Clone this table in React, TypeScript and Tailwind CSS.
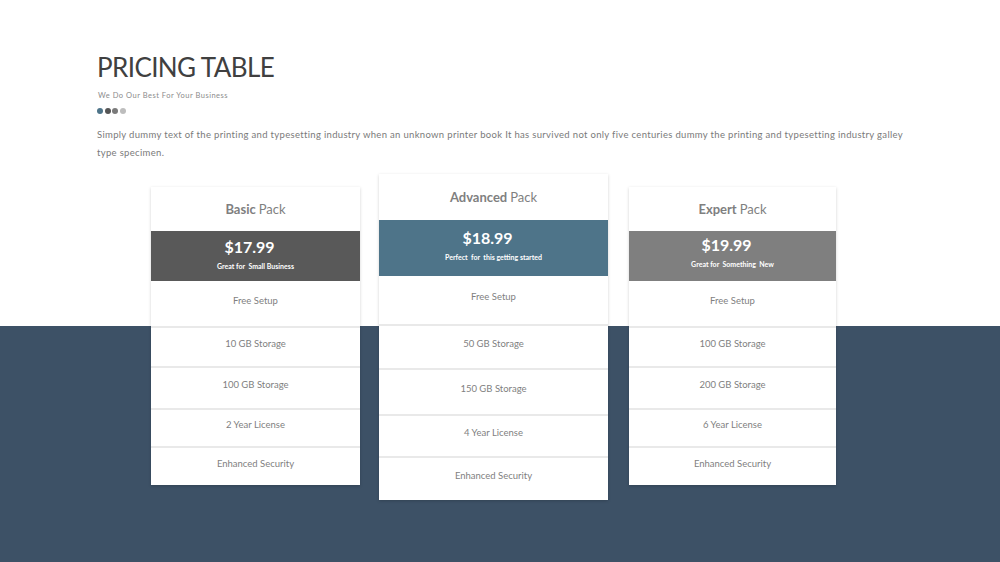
const font = { fontFamily: 'Lato, "Open Sans", sans-serif' };

type Plan = {
  name: string;
  price: string;
  note: string;
  band: string;
  width: string;
  top: string;
  header: string;
  bandH: string;
  bandPad: string;
  rows: { text: string; h: string }[];
};

const plans: Plan[] = [
  {
    name: 'Basic',
    price: '$17.99',
    note: 'Great for  Small Business',
    band: 'bg-[#595959]',
    width: 'w-[209px]',
    top: 'mt-[13px]',
    header: 'h-[44px]',
    bandH: 'h-[50px]',
    bandPad: 'pb-[4px]',
    rows: [
      { text: 'Free Setup', h: 'h-[45px]' },
      { text: '10 GB Storage', h: 'h-[40px]' },
      { text: '100 GB Storage', h: 'h-[42px]' },
      { text: '2 Year License', h: 'h-[38px]' },
      { text: 'Enhanced Security', h: 'h-[39px]' },
    ],
  },
  {
    name: 'Advanced',
    price: '$18.99',
    note: 'Perfect  for  this getting started',
    band: 'bg-[#4e7489]',
    width: 'w-[229px]',
    top: 'mt-0',
    header: 'h-[46px]',
    bandH: 'h-[56px]',
    bandPad: 'pb-[6px]',
    rows: [
      { text: 'Free Setup', h: 'h-[48px]' },
      { text: '50 GB Storage', h: 'h-[44px]' },
      { text: '150 GB Storage', h: 'h-[46px]' },
      { text: '4 Year License', h: 'h-[42px]' },
      { text: 'Enhanced Security', h: 'h-[44px]' },
    ],
  },
  {
    name: 'Expert',
    price: '$19.99',
    note: 'Great for  Something  New',
    band: 'bg-[#7f7f7f]',
    width: 'w-[207px]',
    top: 'mt-[13px]',
    header: 'h-[44px]',
    bandH: 'h-[50px]',
    bandPad: 'pb-[8px]',
    rows: [
      { text: 'Free Setup', h: 'h-[45px]' },
      { text: '100 GB Storage', h: 'h-[40px]' },
      { text: '200 GB Storage', h: 'h-[42px]' },
      { text: '6 Year License', h: 'h-[38px]' },
      { text: 'Enhanced Security', h: 'h-[39px]' },
    ],
  },
];

const PlanCard = ({ plan }: { plan: Plan }) => {
  return (
    <div className={`${plan.width} ${plan.top} bg-white shadow-[0_1px_3px_rgba(0,0,0,0.18)] flex flex-col`}>
      <div className={`${plan.header} flex items-center justify-center text-[13px] text-[#7f7f7f]`}>
        <span className="font-bold">{plan.name}</span>
        <span className="ml-[3px]">Pack</span>
      </div>
      <div className={`${plan.band} ${plan.bandH} ${plan.bandPad} flex flex-col items-center justify-center text-white`}>
        <div className="text-[16px] font-bold leading-none mr-[12px]">{plan.price}</div>
        <div className="text-[7px] font-bold mt-[8px] leading-none whitespace-pre">{plan.note}</div>
      </div>
      {plan.rows.map((row, i) => (
        <div
          key={row.text}
          className={`${row.h} pb-[6px] flex items-center justify-center text-[9.5px] text-[#7f7f7f] ${i > 0 ? 'border-t-2 border-[#e9e9e9]' : ''}`}
        >
          {row.text}
        </div>
      ))}
    </div>
  );
};

export default function App() {
  return (
    <div
      style={font}
      className="w-[1000px] h-[562px] overflow-hidden bg-[linear-gradient(to_bottom,#ffffff_326px,#3d5166_326px)]"
    >
      <div className="pl-[97px] pt-[53px] pr-[60px]">
        <h1 className="text-[26px] leading-[28px] text-[#404040] tracking-[-0.6px]">PRICING TABLE</h1>
        <p className="text-[7.5px] text-[#8c8c8c] mt-[9px] pl-[1px] tracking-[0.5px]">We Do Our Best For Your Business</p>
        <div className="flex gap-[1.5px] mt-[7px]">
          <span className="w-[6px] h-[6px] rounded-full bg-[#4e7489]" />
          <span className="w-[6px] h-[6px] rounded-full bg-[#555555]" />
          <span className="w-[6px] h-[6px] rounded-full bg-[#7a7a7a]" />
          <span className="w-[6px] h-[6px] rounded-full bg-[#bdbdbd]" />
        </div>
        <p className="text-[9.5px] leading-[18px] text-[#7a7a7a] mt-[12px] tracking-[0.32px] whitespace-pre-line">
          {'Simply dummy text of the printing and typesetting industry when an unknown printer book It has survived not only five centuries dummy  the printing and typesetting industry galley\ntype specimen.'}
        </p>
      </div>
      <div className="flex items-start mt-[12px] pl-[151px] gap-[19px]">
        <PlanCard plan={plans[0]} />
        <PlanCard plan={plans[1]} />
        <div className="ml-[2px]">
          <PlanCard plan={plans[2]} />
        </div>
      </div>
    </div>
  );
}
